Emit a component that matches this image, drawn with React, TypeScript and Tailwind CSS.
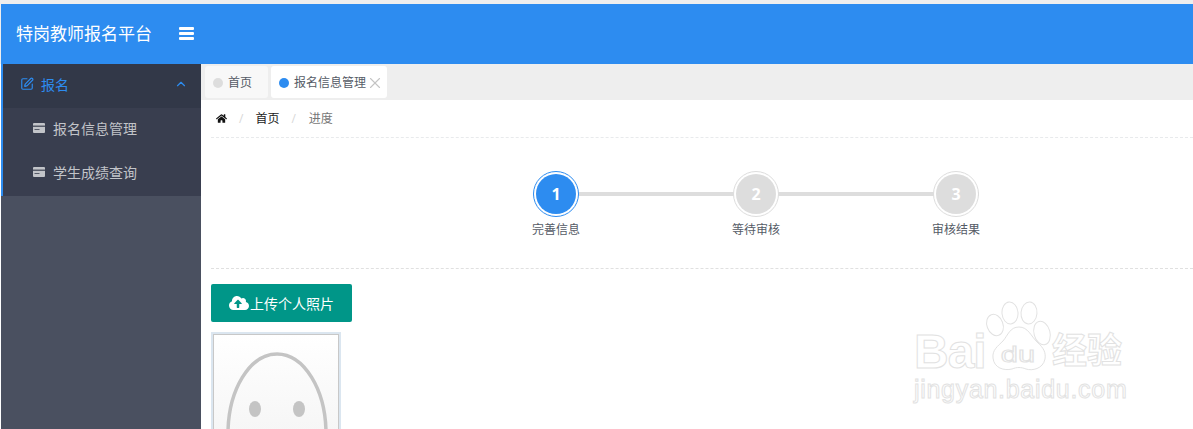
import React from "react";
import { ChevronUp, X, SquarePen } from "lucide-react";
import { FaHome, FaCloudUploadAlt } from "react-icons/fa";

const CJK = "font-['Open_Sans','Noto_Sans_CJK_SC',sans-serif]";

function CardIcon() {
  return (
    <svg width="12" height="10" viewBox="0 0 12 10" className="mb-[1px] shrink-0">
      <rect x="0" y="0" width="12" height="10" rx="1" fill="#c2c4c9" />
      <rect x="0" y="2.5" width="12" height="1.5" fill="#565b68" />
      <rect x="1.5" y="6" width="5" height="1" fill="#565b68" />
    </svg>
  );
}

function Step({ n, label, active }: { n: number; label: string; active?: boolean }) {
  return (
    <div className="relative flex w-[46px] flex-col items-center">
      <div
        className={`flex h-[46px] w-[46px] items-center justify-center rounded-full border bg-white ${
          active ? "border-[#2d8cf0]" : "border-[#dddddd]"
        }`}
      >
        <div
          className={`flex h-[40px] w-[40px] items-center justify-center rounded-full text-[16px] font-bold text-white ${
            active ? "bg-[#2d8cf0]" : "bg-[#dddddd]"
          }`}
        >
          {n}
        </div>
      </div>
      <div className="mt-[3px] whitespace-nowrap text-[12px] leading-[20px] text-[#555b66]">{label}</div>
    </div>
  );
}

function Watermark() {
  const outline = "text-white [-webkit-text-stroke:1px_#e2e2e2]";
  return (
    <div className="pointer-events-none absolute left-[914px] top-[300px] h-[110px] w-[230px] font-['Liberation_Sans',sans-serif]">
      <svg width="70" height="72" viewBox="0 0 70 72" className="absolute left-[70px] top-0" fill="white" stroke="#e2e2e2" strokeWidth="1">
        <ellipse cx="11" cy="25" rx="8" ry="11" transform="rotate(-20 11 25)" />
        <ellipse cx="26" cy="13" rx="8" ry="11" transform="rotate(-5 26 13)" />
        <ellipse cx="45" cy="13" rx="8" ry="11" transform="rotate(5 45 13)" />
        <ellipse cx="58" cy="33" rx="8" ry="12" transform="rotate(-15 58 33)" />
        <path d="M35 27C44 27 47 36 53 42C60 48 62 53 61 59C59 69 48 71 42 69C37 67 33 67 28 69C20 71 10 68 9 58C8 50 14 46 19 41C24 35 26 27 35 27z" />
      </svg>
      <span className={`absolute left-0 top-[27px] text-[48px] font-bold leading-[50px] tracking-[-1px] ${outline}`}>Bai</span>
      <span className={`absolute left-[84px] top-[42px] w-[40px] scale-x-[1.4] text-center text-[22px] leading-[26px] ${outline}`}>du</span>
      <span className={`absolute left-[138px] top-[30px] whitespace-nowrap text-[35px] font-bold leading-[40px] ${CJK} ${outline}`}>经验</span>
      <span className={`absolute left-0 top-[74px] whitespace-nowrap text-[25px] leading-[30px] tracking-[0.7px] ${outline}`}>jingyan.baidu.com</span>
    </div>
  );
}

export default function App() {
  return (
    <div className={`relative flex h-[429px] w-[1193px] flex-col overflow-hidden bg-[#eeeeee] ${CJK}`}>
      <div className="ml-px mt-[4px] flex h-[60px] shrink-0 items-center bg-[#2d8cf0] pl-[15px]">
        <span className="text-[17px] text-white">特岗教师报名平台</span>
        <svg width="15" height="13" viewBox="0 0 15 13" className="mb-[2px] ml-[27px]" fill="white">
          <rect x="0" y="0" width="15" height="3" rx="1" />
          <rect x="0" y="5" width="15" height="3" rx="1" />
          <rect x="0" y="10" width="15" height="3" rx="1" />
        </svg>
      </div>
      <div className="flex min-h-0 flex-1 bg-white pl-px">
        <aside className="flex w-[200px] shrink-0 flex-col bg-[#4a5060]">
          <div className="border-l-2 border-[#2d8cf0]">
            <div className="flex h-[44px] items-center bg-[#323848] pb-[4px] pl-[17px] pr-[13px] text-[14px] text-[#2d8cf0]">
              <SquarePen size={14} strokeWidth={2} />
              <span className="ml-[7px]">报名</span>
              <ChevronUp size={14} strokeWidth={2} className="ml-auto" />
            </div>
            <div className="flex h-[44px] items-center gap-[8px] bg-[#393e4f] pb-[4px] pl-[30px] text-[14px] text-[#c2c4c9]">
              <CardIcon />
              报名信息管理
            </div>
            <div className="flex h-[44px] items-center gap-[8px] bg-[#393e4f] pb-[4px] pl-[30px] text-[14px] text-[#c2c4c9]">
              <CardIcon />
              学生成绩查询
            </div>
          </div>
        </aside>
        <main className="flex min-w-0 flex-1 flex-col">
          <div className="flex h-[36px] shrink-0 gap-[3px] bg-[#eeeeee] pl-[4px] pt-[2px]">
            <div className="flex h-[32px] w-[63px] items-center rounded-[3px] bg-[#f8f8f8] pl-[8px] pt-[2px] text-[12px] text-[#555b66]">
              <span className="mr-[5px] h-[10px] w-[10px] rounded-full bg-[#dddddd]" />
              首页
            </div>
            <div className="flex h-[32px] w-[116px] items-center rounded-[3px] bg-white pl-[8px] pt-[2px] text-[12px] text-[#555b66]">
              <span className="mr-[5px] h-[10px] w-[10px] rounded-full bg-[#2d8cf0]" />
              报名信息管理
              <X size={18} strokeWidth={1.5} className="text-[#c4c4c4]" />
            </div>
          </div>
          <div className="ml-[10px] flex h-[38px] shrink-0 items-center border-b border-dashed border-[#e8eaec] pl-[5px] text-[12px]">
            <FaHome size={11} className="text-[#111111]" />
            <span className="mx-[12px] text-[#d8d8d8]">/</span>
            <span className="text-[#222222]">首页</span>
            <span className="ml-[12px] mr-[13px] text-[#d8d8d8]">/</span>
            <span className="text-[#777777]">进度</span>
          </div>
          <div className="relative ml-[10px] flex h-[131px] shrink-0 items-start justify-center border-b border-dashed border-[#e0e0e0] pl-[108px] pt-[33px]">
            <div className="flex w-[446px] items-start justify-between bg-[linear-gradient(#dddddd,#dddddd)] bg-[length:100%_4px] bg-[position:0_21px] bg-no-repeat">
              <Step n={1} label="完善信息" active />
              <Step n={2} label="等待审核" />
              <Step n={3} label="审核结果" />
            </div>
          </div>
          <div className="ml-[10px] pt-[15px]">
            <button className="flex h-[38px] w-[141px] items-center justify-center rounded-[2px] bg-[#009688] text-[14px] text-white">
              <FaCloudUploadAlt size={20} className="mr-[1px]" />
              <span>上传个人照片</span>
            </button>
            <div className="mt-[10px] h-[120px] w-[130px] overflow-hidden border-2 border-[#dbe6f0]">
              <div className="h-[140px] w-full border border-[#c8c8c8] bg-[linear-gradient(#ffffff,#f2f2f2)]">
                <svg width="124" height="130" viewBox="0 0 124 130" fill="none">
                  <ellipse cx="63" cy="99" rx="49" ry="80" stroke="#c4c4c4" strokeWidth="3.5" />
                  <ellipse cx="41" cy="74" rx="6" ry="8" fill="#c4c4c4" />
                  <ellipse cx="85" cy="74" rx="6" ry="8" fill="#c4c4c4" />
                </svg>
              </div>
            </div>
          </div>
        </main>
      </div>
      <Watermark />
    </div>
  );
}
